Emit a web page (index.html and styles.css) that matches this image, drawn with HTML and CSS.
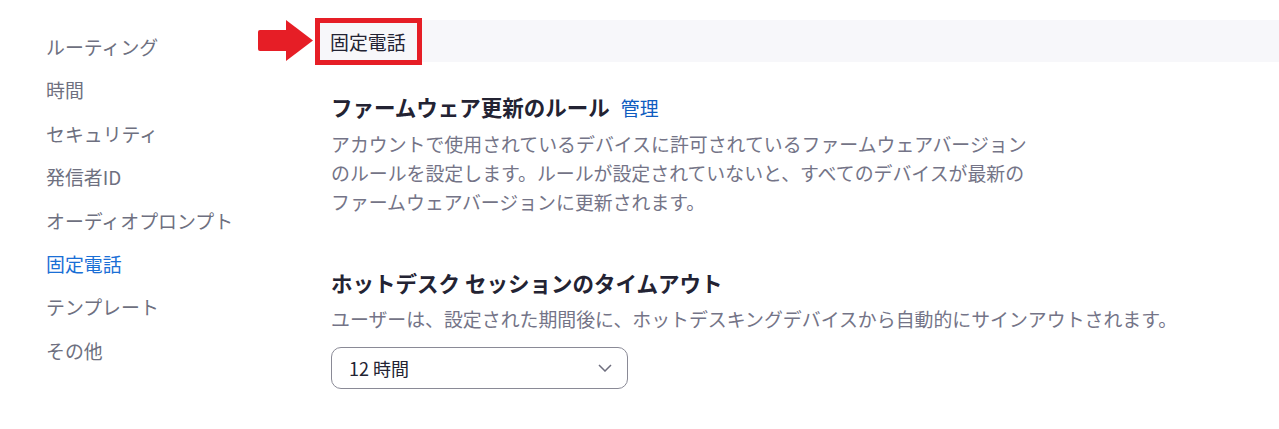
FILE: index.html
```html
<!DOCTYPE html>
<html lang="ja">
<head>
  <meta charset="UTF-8">
  <title>電話の設定</title>
  <meta name="viewport" content="width=device-width, initial-scale=1.0">
  <link rel="stylesheet" href="styles.css">
</head>
<body>

<div class="page">
  <nav class="sidebar">
    <a class="nav-item">ルーティング</a>
    <a class="nav-item">時間</a>
    <a class="nav-item">セキュリティ</a>
    <a class="nav-item">発信者ID</a>
    <a class="nav-item">オーディオプロンプト</a>
    <a class="nav-item active">固定電話</a>
    <a class="nav-item">テンプレート</a>
    <a class="nav-item">その他</a>
  </nav>

  <main class="content">
    <div class="tab-row">
      <svg class="pointer" width="57" height="44" viewBox="0 0 57 44">
        <rect x="0" y="11" width="30" height="21" rx="2" fill="#e61e26"/>
        <polygon points="28,1 55,21.5 28,42" fill="#e61e26"/>
      </svg>
      <div class="tab-bar">
        <span class="tab-label">固定電話</span>
      </div>
    </div>

    <section class="setting">
      <h2>ファームウェア更新のルール <a class="link">管理</a></h2>
      <p class="desc desc-wrap">アカウントで使用されているデバイスに許可されているファームウェアバージョンのルールを設定します。ルールが設定されていないと、すべてのデバイスが最新のファームウェアバージョンに更新されます。</p>
    </section>

    <section class="setting second">
      <h2>ホットデスク セッションのタイムアウト</h2>
      <p class="desc">ユーザーは、設定された期間後に、ホットデスキングデバイスから自動的にサインアウトされます。</p>
      <div class="select">
        <span>12 時間</span>
        <svg width="14" height="8" viewBox="0 0 14 8">
          <polyline points="1,1 7,7 13,1" fill="none" stroke="#6e6e7e" stroke-width="1.5"/>
        </svg>
      </div>
    </section>
  </main>
</div>

</body>
</html>
```

FILE: styles.css
```css
body {
  margin: 0;
  font-family: "Noto Sans CJK JP", "Noto Sans", sans-serif;
  background: white;
  color: #232333;
}
.page {
  display: flex;
}
.sidebar {
  width: 212px;
  padding: 25px 0 0 46px;
  display: flex;
  flex-direction: column;
}
.nav-item {
  font-size: 18.9px;
  line-height: 43.4px;
  color: #6e7080;
}
.nav-item.active {
  color: #1a6fd6;
}
.content {
  flex: 1;
}
.tab-row {
  display: flex;
  align-items: center;
  margin-top: 19px;
}
.pointer {
  flex: none;
}
.tab-bar {
  flex: 1;
  height: 42px;
  background: #f7f7fa;
  display: flex;
  align-items: center;
}
.tab-label {
  box-sizing: border-box;
  width: 107px;
  height: 47px;
  padding-left: 10px;
  border: 5px solid #e61e26;
  display: flex;
  align-items: center;
  font-size: 18.9px;
  color: #232333;
}
.setting {
  padding-left: 73px;
  margin-top: 29px;
}
.setting.second {
  margin-top: 52px;
}
h2 {
  margin: 0;
  font-size: 21.5px;
  line-height: 30px;
  font-weight: 700;
  color: #232333;
}
.link {
  font-size: 18.9px;
  font-weight: 400;
  color: #0e5cbf;
  margin-left: 6px;
}
.desc {
  margin: 6px 0 0;
  font-size: 18.9px;
  line-height: 29px;
  color: #747487;
}
.desc-wrap {
  max-width: 37.5em;
}
.select {
  box-sizing: border-box;
  width: 297px;
  height: 42px;
  margin-top: 14px;
  padding: 0 15px 0 17px;
  border: 1px solid #8a8a96;
  border-radius: 10px;
  display: flex;
  align-items: center;
  justify-content: space-between;
  font-size: 18px;
  color: #232333;
}
```
